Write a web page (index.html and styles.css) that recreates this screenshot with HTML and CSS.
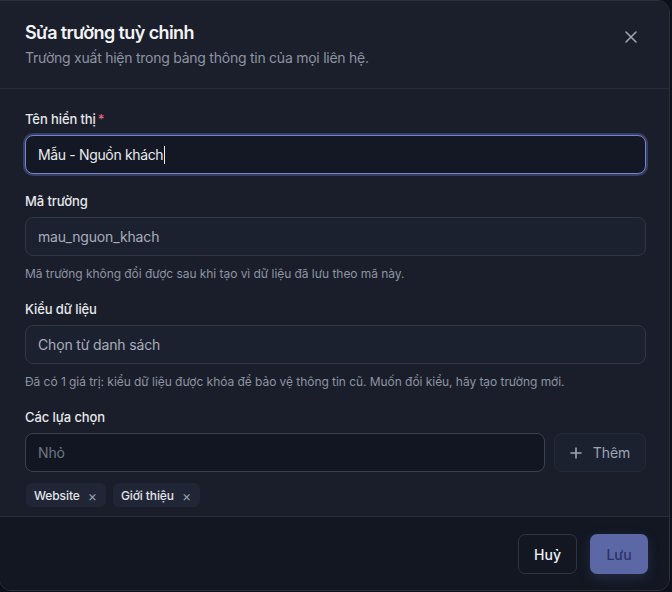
FILE: index.html
```html
<!DOCTYPE html>
<html lang="vi">
<head>
<meta charset="utf-8">
<link rel="stylesheet" href="styles.css">
</head>
<body>
<div class="dialog">
  <header class="head">
    <div class="head-text">
      <h1 class="title">Sửa trường tuỳ chỉnh</h1>
      <p class="subtitle">Trường xuất hiện trong bảng thông tin của mọi liên hệ.</p>
    </div>
    <button class="close" aria-label="Đóng">
      <svg width="14" height="14" viewBox="0 0 14 14"><path d="M2 2L12 12M12 2L2 12" stroke="currentColor" stroke-width="1.5" stroke-linecap="round"/></svg>
    </button>
  </header>
  <main class="body">
    <div class="field">
      <div class="label">Tên hiển thị<span class="req">*</span></div>
      <div class="input focus">Mẫu - Nguồn khách<span class="caret"></span></div>
    </div>
    <div class="field">
      <div class="label">Mã trường</div>
      <div class="input muted">mau_nguon_khach</div>
      <div class="help">Mã trường không đổi được sau khi tạo vì dữ liệu đã lưu theo mã này.</div>
    </div>
    <div class="field">
      <div class="label">Kiểu dữ liệu</div>
      <div class="input muted">Chọn từ danh sách</div>
      <div class="help">Đã có 1 giá trị: kiểu dữ liệu được khóa để bảo vệ thông tin cũ. Muốn đổi kiểu, hãy tạo trường mới.</div>
    </div>
    <div class="field">
      <div class="label">Các lựa chọn</div>
      <div class="row">
        <div class="input dark placeholder">Nhỏ</div>
        <button class="add">
          <svg width="12" height="12" viewBox="0 0 12 12"><path d="M6 1V11M1 6H11" stroke="currentColor" stroke-width="1.6" stroke-linecap="round"/></svg>
          <span>Thêm</span>
        </button>
      </div>
      <div class="chips">
        <span class="chip">Website<span class="x">×</span></span>
        <span class="chip">Giới thiệu<span class="x">×</span></span>
      </div>
    </div>
  </main>
  <footer class="foot">
    <button class="btn cancel">Huỷ</button>
    <button class="btn save">Lưu</button>
  </footer>
</div>
</body>
</html>
```

FILE: styles.css
```css
* { box-sizing: border-box; }
html, body { margin: 0; padding: 0; }
body {
  background: #0d1018;
  font-family: Inter, "Noto Sans", sans-serif;
  width: 672px;
  height: 592px;
  overflow: hidden;
}
.dialog {
  width: 671px;
  height: 591px;
  margin-left: -1px;
  background: #1a1e2a;
  border: 1px solid #2a2f3c;
  border-radius: 12px;
  border-top-left-radius: 0;
  overflow: hidden;
  display: flex;
  flex-direction: column;
}
.head {
  display: flex;
  justify-content: space-between;
  align-items: flex-start;
  padding: 20px 23px 20px 25px;
  height: 88px;
  border-bottom: 1px solid #262b38;
  background: #1b1f2b;
}
.title {
  margin: 0;
  font-size: 18px;
  line-height: 24px;
  font-weight: 600;
  color: #f2f3f6;
  letter-spacing: -0.6px;
}
.subtitle {
  margin: 3px 0 0;
  font-size: 14px;
  line-height: 20px;
  color: #8d94a3;
  letter-spacing: -0.25px;
}
.close {
  background: none;
  border: 0;
  padding: 0;
  color: #a2a8b5;
  margin-top: 9px;
  margin-right: 8px;
  display: flex;
}
.body {
  flex: 1;
  padding: 21px 23px 0 25px;
  background: #1a1e2a;
  display: flex;
  flex-direction: column;
  gap: 18px;
  border-bottom: 1px solid #2a2f3c;
}
.field { display: flex; flex-direction: column; }
.label {
  font-size: 13px;
  line-height: 18px;
  font-weight: 500;
  color: #e6e8ec;
  margin-bottom: 7px;
  letter-spacing: -0.1px;
}
.req { color: #e0677a; margin-left: 2px; }
.input {
  height: 39px;
  border: 1px solid #303646;
  border-radius: 8px;
  background: #1c2130;
  padding: 0 12px;
  display: flex;
  align-items: center;
  font-size: 14px;
  color: #e9ebef;
  letter-spacing: -0.15px;
}
.input.focus {
  background: #141824;
  border: 1px solid #7482cf;
  box-shadow: 0 0 0 2px rgba(110, 124, 200, 0.35);
  letter-spacing: -0.35px;
}
.caret {
  display: inline-block;
  width: 1px;
  height: 18px;
  background: #e9ebef;
  margin-left: 1px;
}
.input.muted { color: #a8aebb; }
.input.dark {
  background: #121622;
  border-color: #3a4050;
  flex: 1;
}
.placeholder { color: #6f7686; }
.help {
  margin-top: 10px;
  font-size: 12px;
  line-height: 16px;
  color: #8d94a3;
  letter-spacing: -0.05px;
}
.row { display: flex; gap: 9px; }
.add {
  width: 92px;
  height: 39px;
  border: 1px solid #262b39;
  border-radius: 8px;
  background: #1c2130;
  color: #9ea4b2;
  font-family: inherit;
  font-size: 14px;
  display: flex;
  align-items: center;
  justify-content: center;
  gap: 11px;
  padding: 0;
}
.chips { display: flex; gap: 7px; margin-top: 11px; margin-left: 1px; }
.chip {
  display: inline-flex;
  align-items: center;
  height: 24px;
  padding: 0 9px 0 8px;
  background: #212636;
  border-radius: 6px;
  font-size: 12px;
  font-weight: 500;
  color: #e3e5ea;
  letter-spacing: -0.1px;
}
.chip .x { margin-left: 8px; color: #9aa0ad; font-size: 14px; font-weight: 400; }
.foot {
  height: 73px;
  flex-shrink: 0;
  background: #121722;
  display: flex;
  justify-content: flex-end;
  align-items: flex-start;
  gap: 13px;
  padding: 17px 21px 0 0;
}
.btn {
  height: 40px;
  border-radius: 7px;
  font-family: inherit;
  font-size: 14px;
  font-weight: 500;
  padding: 0;
}
.cancel {
  width: 59px;
  background: #121722;
  border: 1px solid #2e3442;
  color: #eef0f3;
}
.save {
  width: 58px;
  background: #5c67a6;
  border: 0;
  color: #2b3266;
  box-shadow: 0 4px 12px rgba(92, 103, 166, 0.25);
}
```
